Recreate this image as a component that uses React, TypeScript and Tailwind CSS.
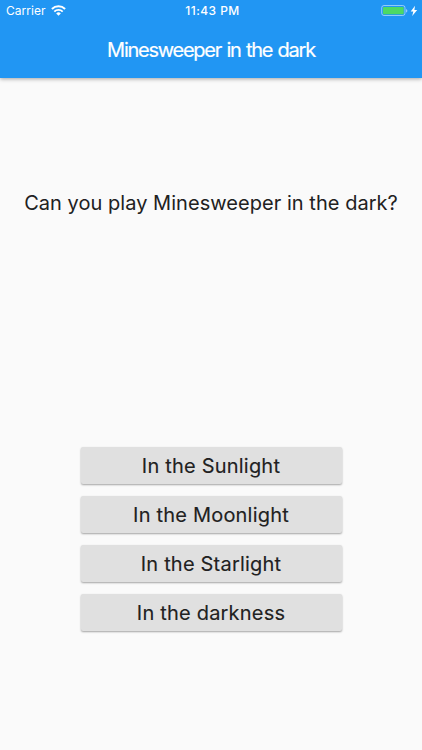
const levels = ['In the Sunlight', 'In the Moonlight', 'In the Starlight', 'In the darkness']

function StatusBar() {
  return (
    <div className="grid h-[22px] grid-cols-3 items-center text-[12px] text-white">
      <div className="flex items-center gap-[5px] pl-[6px]">
        <span className="tracking-[0.05px]">Carrier</span>
        <svg className="mb-px" width="15" height="11" viewBox="0 0 15 11" fill="none" stroke="currentColor">
          <path d="M.9 4a9.6 9.6 0 0 1 13.2 0" strokeWidth="2" />
          <path d="M3.3 6.6a6 6 0 0 1 8.4 0" strokeWidth="1.9" />
          <path d="M7.5 10.7 5.2 8.4a3.2 3.2 0 0 1 4.6 0z" fill="currentColor" stroke="none" />
        </svg>
      </div>
      <span className="pl-[3px] text-center font-medium tracking-[0.45px]">11:43 PM</span>
      <div className="flex items-center justify-end pr-[4px]">
        <svg width="37" height="12" viewBox="0 0 37 12">
          <rect x=".7" y=".5" width="23.3" height="10" rx="2.3" fill="none" stroke="#fff" strokeOpacity=".5" />
          <rect x="2" y="2" width="20.7" height="7.2" rx=".8" fill="#4cd964" />
          <path d="M25 4v3.6q1.4-.4 1.4-1.8T25 4z" fill="#fff" fillOpacity=".5" />
          <path d="m34 .8-4.3 5.6h2.6L31.2 11l5-6h-2.8z" fill="#fff" />
        </svg>
      </div>
    </div>
  )
}

export default function App() {
  return (
    <div className="flex h-[750px] w-[422px] flex-col bg-[#fafafa] font-['Inter',sans-serif] text-[#212121]">
      <header className="h-[77.5px] shrink-0 bg-[#2196f3] shadow-[0_1px_4px_rgba(0,0,0,0.35)]">
        <StatusBar />
        <h1 className="flex h-[55px] items-center justify-center text-[20px] tracking-[-1.25px] [word-spacing:1px] text-white [-webkit-text-stroke:0.2px]">
          Minesweeper in the dark
        </h1>
      </header>

      <main className="flex flex-1 flex-col items-center">
        <p className="mt-[110.5px] whitespace-nowrap text-[20px] leading-[30px] tracking-[0.04px]">
          Can you play Minesweeper in the dark?
        </p>
        <div className="mt-[229px] flex w-[261px] flex-col gap-[12px]">
          {levels.map((label) => (
            <button
              key={label}
              className="flex h-[37px] items-center justify-center rounded-[2px] bg-[#e0e0e0] text-[20px] tracking-[0.2px] shadow-[0_1px_2px_rgba(0,0,0,0.35)] [-webkit-text-stroke:0.12px]"
            >
              {label}
            </button>
          ))}
        </div>
      </main>
    </div>
  )
}
